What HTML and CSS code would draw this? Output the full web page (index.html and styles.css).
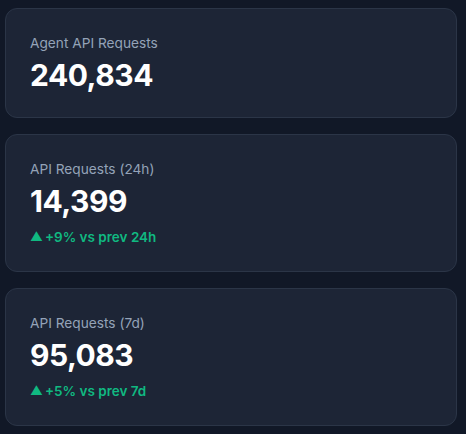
FILE: index.html
```html
<!DOCTYPE html>
<html>
<head>
<meta charset="utf-8">
<link rel="stylesheet" href="styles.css">
</head>
<body>
<div class="stack">
  <div class="card">
    <div class="label">Agent API Requests</div>
    <div class="value">240,834</div>
  </div>
  <div class="card">
    <div class="label">API Requests (24h)</div>
    <div class="value">14,399</div>
    <div class="trend"><span class="tri">▲</span>+9% vs prev 24h</div>
  </div>
  <div class="card">
    <div class="label">API Requests (7d)</div>
    <div class="value">95,083</div>
    <div class="trend"><span class="tri">▲</span>+5% vs prev 7d</div>
  </div>
</div>
</body>
</html>
```
FILE: styles.css
```css
html, body {
  margin: 0;
  background: #111827;
}
body {
  font-family: Inter, "Noto Sans", sans-serif;
  padding: 8px 9px 8px 5px;
}
.stack {
  display: flex;
  flex-direction: column;
  gap: 16px;
}
.card {
  background: #1d2536;
  border: 1px solid #2b3547;
  border-radius: 12px;
  padding: 24px;
}
.label {
  font-size: 13.7px;
  line-height: 20px;
  color: #94a3b8;
}
.value {
  margin-top: 4px;
  font-size: 30px;
  line-height: 36px;
  font-weight: 700;
  letter-spacing: -0.5px;
  color: #ffffff;
}
.trend {
  margin-top: 8px;
  font-size: 13.5px;
  line-height: 20px;
  font-weight: 600;
  color: #10b981;
  display: flex;
  align-items: center;
}
.tri {
  font-size: 12.5px;
  margin-right: 2px;
}
```
